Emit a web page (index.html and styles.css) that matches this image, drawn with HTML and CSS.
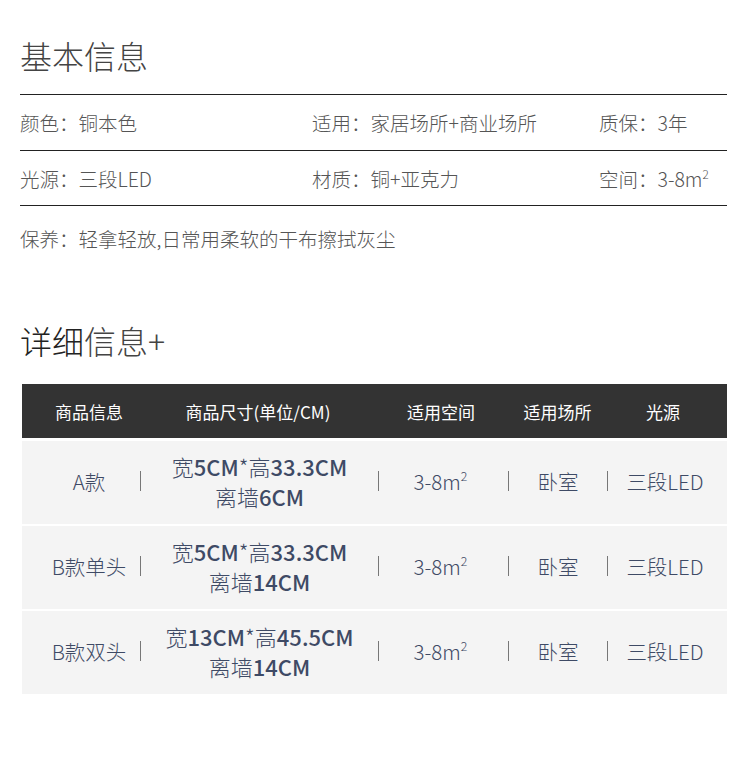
FILE: index.html
```html
<!DOCTYPE html>
<html lang="zh">
<head>
<meta charset="utf-8">
<link rel="stylesheet" href="styles.css">
</head>
<body>
<div class="page">
  <h2 class="title">基本信息</h2>
  <div class="info">
    <div class="info-row">
      <div>颜色：铜本色</div>
      <div>适用：家居场所+商业场所</div>
      <div>质保：3年</div>
    </div>
    <div class="info-row">
      <div>光源：三段LED</div>
      <div>材质：铜+亚克力</div>
      <div>空间：3-8m<sup>2</sup></div>
    </div>
    <div class="info-row last">
      <div class="wide">保养：轻拿轻放,日常用柔软的干布擦拭灰尘</div>
    </div>
  </div>

  <h2 class="title title2"><span class="dark">详细</span>信息+</h2>

  <div class="table">
    <div class="thead">
      <div class="c c1">商品信息</div>
      <div class="c c2">商品尺寸(单位/CM)</div>
      <div class="c c3">适用空间</div>
      <div class="c c4">适用场所</div>
      <div class="c c5">光源</div>
    </div>
    <div class="trow">
      <div class="c c1">A款</div>
      <div class="c c2 sep"><span class="size">宽<b>5CM</b>*高<b>33.3CM</b><br>离墙<b>6CM</b></span></div>
      <div class="c c3 sep"><span>3-8m<sup>2</sup></span></div>
      <div class="c c4 sep"><span>卧室</span></div>
      <div class="c c5 sep"><span>三段LED</span></div>
    </div>
    <div class="trow">
      <div class="c c1">B款单头</div>
      <div class="c c2 sep"><span class="size">宽<b>5CM</b>*高<b>33.3CM</b><br>离墙<b>14CM</b></span></div>
      <div class="c c3 sep"><span>3-8m<sup>2</sup></span></div>
      <div class="c c4 sep"><span>卧室</span></div>
      <div class="c c5 sep"><span>三段LED</span></div>
    </div>
    <div class="trow">
      <div class="c c1">B款双头</div>
      <div class="c c2 sep"><span class="size">宽<b>13CM</b>*高<b>45.5CM</b><br>离墙<b>14CM</b></span></div>
      <div class="c c3 sep"><span>3-8m<sup>2</sup></span></div>
      <div class="c c4 sep"><span>卧室</span></div>
      <div class="c c5 sep"><span>三段LED</span></div>
    </div>
  </div>
</div>
</body>
</html>
```

FILE: styles.css
```css
* { box-sizing: border-box; }
html, body { margin: 0; padding: 0; background: #fff; }
body {
  font-family: "Noto Sans CJK SC", "Noto Sans", sans-serif;
  color: #555;
}
.page {
  width: 750px;
  padding: 35px 23px 0 20px;
}
.title {
  margin: 0;
  font-size: 32px;
  line-height: 40px;
  font-weight: 300;
  color: #444;
}
.info {
  margin-top: 19px;
  border-top: 1px solid #222;
}
.info-row {
  display: grid;
  grid-template-columns: 292px 287px 1fr;
  height: 56px;
  align-items: center;
  font-size: 19.5px;
  font-weight: 300;
  color: #555;
  border-bottom: 1px solid #222;
}
.info-row:nth-child(2) { height: 55px; }
.info-row.last {
  border-bottom: 0;
  height: 56px;
  padding-top: 8px;
}
.info-row .wide { grid-column: 1 / -1; }
sup {
  font-size: 0.6em;
  vertical-align: 0.7em;
  line-height: 0;
}
.title2 {
  margin-top: 58px;
}
.title2 .dark { color: #222; }
.table {
  margin: 24px 0 0 2px;
  width: 705px;
}
.thead, .trow {
  display: grid;
  grid-template-columns: 118px 238px 130px 99px 120px;
  align-items: center;
}
.thead {
  background: #333;
  height: 54px;
  color: #fff;
  font-size: 17px;
  font-weight: 400;
}
.thead .c { text-align: center; }
.thead .c1 { padding-left: 16px; }
.thead .c2 { padding-right: 2px; }
.thead .c3 { padding-right: 4px; }
.thead .c5 { padding-right: 8px; }
.trow {
  background: #f4f4f4;
  height: 83px;
  margin-top: 2px;
  color: #3e4a65;
  font-size: 20.5px;
  font-weight: 300;
}
.thead + .trow { margin-top: 3px; }
.trow .c {
  display: flex;
  align-items: center;
  justify-content: center;
  height: 100%;
  padding-bottom: 4px;
}
.trow .c1 { padding-left: 16px; }
.trow .sep::before {
  content: "";
  width: 1px;
  height: 20px;
  background: #777;
  flex: none;
}
.trow .sep > span {
  flex: 1;
  text-align: center;
}
.trow .c3 > span { padding-right: 6px; }
.trow .c5 > span { padding-right: 5px; }
.size {
  line-height: 30px;
  font-size: 22px;
}
.size b { font-weight: 500; }
```
